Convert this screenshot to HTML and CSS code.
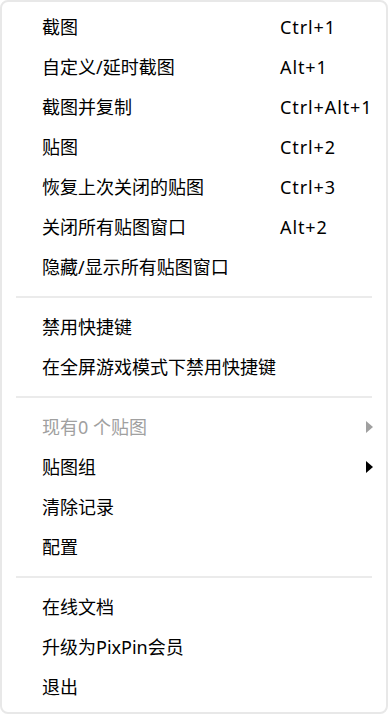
FILE: index.html
```html
<!DOCTYPE html>
<html lang="zh-CN">
<head>
<meta charset="utf-8">
<link rel="stylesheet" href="styles.css">
</head>
<body>
<div class="menu">
  <div class="item"><span class="label">截图</span><span class="key">Ctrl+1</span></div>
  <div class="item"><span class="label">自定义/延时截图</span><span class="key">Alt+1</span></div>
  <div class="item"><span class="label">截图并复制</span><span class="key">Ctrl+Alt+1</span></div>
  <div class="item"><span class="label">贴图</span><span class="key">Ctrl+2</span></div>
  <div class="item"><span class="label">恢复上次关闭的贴图</span><span class="key">Ctrl+3</span></div>
  <div class="item"><span class="label">关闭所有贴图窗口</span><span class="key">Alt+2</span></div>
  <div class="item"><span class="label">隐藏/显示所有贴图窗口</span></div>
  <div class="sep"></div>
  <div class="item"><span class="label">禁用快捷键</span></div>
  <div class="item"><span class="label">在全屏游戏模式下禁用快捷键</span></div>
  <div class="sep"></div>
  <div class="item disabled"><span class="label">现有0 个贴图</span><span class="key"></span><span class="arrow"></span></div>
  <div class="item"><span class="label">贴图组</span><span class="key"></span><span class="arrow"></span></div>
  <div class="item"><span class="label">清除记录</span></div>
  <div class="item"><span class="label">配置</span></div>
  <div class="sep"></div>
  <div class="item"><span class="label">在线文档</span></div>
  <div class="item"><span class="label">升级为PixPin会员</span></div>
  <div class="item"><span class="label">退出</span></div>
</div>
</body>
</html>
```
FILE: styles.css
```css
html, body {
  margin: 0;
  padding: 0;
  background: #ffffff;
}
.menu {
  box-sizing: border-box;
  width: 388px;
  height: 714px;
  border: 2px solid #e8e8e8;
  border-radius: 8px;
  background: #ffffff;
  padding: 5px 0;
  font-family: "Noto Sans", "Noto Sans CJK SC", sans-serif;
  font-size: 18px;
  color: #000000;
}
.item {
  height: 40px;
  display: grid;
  grid-template-columns: 238px 1fr auto;
  align-items: center;
  padding: 0 13px 0 40px;
  white-space: nowrap;
}
.label, .key {
  line-height: 40px;
}
.key {
  letter-spacing: 0.9px;
}
.disabled {
  color: #a0a0a0;
}
.arrow {
  width: 0;
  height: 0;
  border-top: 6px solid transparent;
  border-bottom: 6px solid transparent;
  border-left: 7px solid currentColor;
}
.sep {
  height: 2px;
  background: #ebebeb;
  margin: 9px 14px 9px 14px;
}
```
